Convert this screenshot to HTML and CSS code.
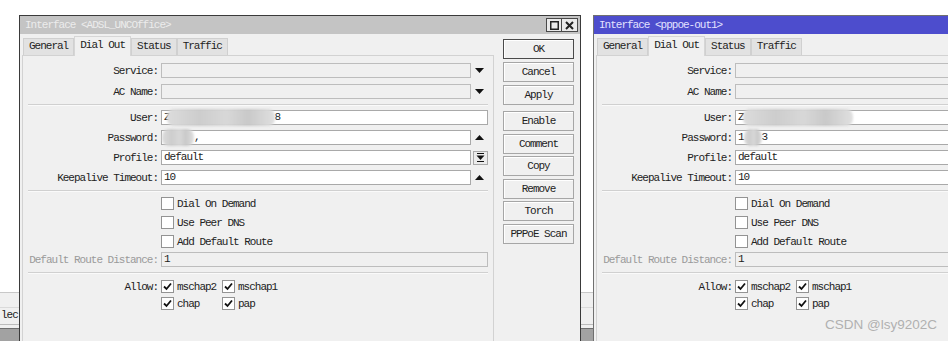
FILE: index.html
```html
<!DOCTYPE html>
<html lang="en">
<head>
    <meta charset="UTF-8">
    <title>Interface - Dial Out</title>
    <link rel="stylesheet" href="styles.css">
</head>
<body>
<div class="desktop">
    <div class="backdrop">
        <div class="back-blank"></div>
        <div class="back-row"></div>
        <div class="back-row tall"><span class="back-text">lec</span></div>
        <div class="back-gap"></div>
        <div class="back-bar"></div>
    </div>

    <!-- inactive window -->
    <div class="window win-left">
        <div class="titlebar">
            <span class="title">Interface &lt;ADSL_UNCOffice&gt;</span>
            <div class="title-btns">
                <span class="tbtn"><svg width="9" height="9" viewBox="0 0 9 9"><rect x="0.75" y="0.75" width="7.5" height="7.5" fill="none" stroke="#222" stroke-width="1.5"/></svg></span>
                <span class="tbtn"><svg width="9" height="9" viewBox="0 0 9 9"><path d="M1 1L8 8M8 1L1 8" stroke="#222" stroke-width="2"/></svg></span>
            </div>
        </div>
        <div class="win-body">
            <div class="tabbox">
                <div class="tabs">
                    <span class="tab">General</span>
                    <span class="tab active">Dial Out</span>
                    <span class="tab">Status</span>
                    <span class="tab">Traffic</span>
                </div>
                <div class="panel">
                    <div class="row first">
                        <span class="label">Service:</span>
                        <span class="field off"></span>
                        <span class="arrow"><svg width="9" height="5" viewBox="0 0 9 5"><path d="M0 0H9L4.5 5Z" fill="#111"/></svg></span>
                    </div>
                    <div class="row gap6">
                        <span class="label">AC Name:</span>
                        <span class="field off"></span>
                        <span class="arrow"><svg width="9" height="5" viewBox="0 0 9 5"><path d="M0 0H9L4.5 5Z" fill="#111"/></svg></span>
                    </div>
                    <div class="sep"></div>
                    <div class="row gap4">
                        <span class="label">User:</span>
                        <span class="field wide">Z<span class="blur user-l"></span>8</span>
                    </div>
                    <div class="row">
                        <span class="label">Password:</span>
                        <span class="field"><span class="blur pass-l"></span>,</span>
                        <span class="arrow"><svg width="9" height="5" viewBox="0 0 9 5"><path d="M0 5H9L4.5 0Z" fill="#111"/></svg></span>
                    </div>
                    <div class="row">
                        <span class="label">Profile:</span>
                        <span class="field">default</span>
                        <span class="drop-btn"><svg width="9" height="9" viewBox="0 0 9 9"><path d="M1 0.5H8M1 8.5H8" stroke="#111"/><path d="M0.5 2.5H8.5L4.5 7Z" fill="#111"/></svg></span>
                    </div>
                    <div class="row">
                        <span class="label">Keepalive Timeout:</span>
                        <span class="field">10</span>
                        <span class="arrow"><svg width="9" height="5" viewBox="0 0 9 5"><path d="M0 5H9L4.5 0Z" fill="#111"/></svg></span>
                    </div>
                    <div class="sep"></div>
                    <div class="row check">
                        <span class="label"></span>
                        <span class="opt"><span class="cb"></span>Dial On Demand</span>
                    </div>
                    <div class="row check gap6">
                        <span class="label"></span>
                        <span class="opt"><span class="cb"></span>Use Peer DNS</span>
                    </div>
                    <div class="row check gap6">
                        <span class="label"></span>
                        <span class="opt"><span class="cb"></span>Add Default Route</span>
                    </div>
                    <div class="row gap4">
                        <span class="label muted">Default Route Distance:</span>
                        <span class="field wide off">1</span>
                    </div>
                    <div class="sep"></div>
                    <div class="row check gap6">
                        <span class="label">Allow:</span>
                        <span class="opt col"><span class="cb on"><svg width="11" height="11" viewBox="0 0 11 11"><path d="M2 5.5L4.5 8L9 2.5" fill="none" stroke="#111" stroke-width="1.8"/></svg></span>mschap2</span>
                        <span class="opt"><span class="cb on"><svg width="11" height="11" viewBox="0 0 11 11"><path d="M2 5.5L4.5 8L9 2.5" fill="none" stroke="#111" stroke-width="1.8"/></svg></span>mschap1</span>
                    </div>
                    <div class="row check gap4">
                        <span class="label"></span>
                        <span class="opt col"><span class="cb on"><svg width="11" height="11" viewBox="0 0 11 11"><path d="M2 5.5L4.5 8L9 2.5" fill="none" stroke="#111" stroke-width="1.8"/></svg></span>chap</span>
                        <span class="opt"><span class="cb on"><svg width="11" height="11" viewBox="0 0 11 11"><path d="M2 5.5L4.5 8L9 2.5" fill="none" stroke="#111" stroke-width="1.8"/></svg></span>pap</span>
                    </div>
                </div>
            </div>
            <div class="actions">
                <button class="btn default">OK</button>
                <button class="btn">Cancel</button>
                <button class="btn">Apply</button>
                <button class="btn group">Enable</button>
                <button class="btn tight">Comment</button>
                <button class="btn tight">Copy</button>
                <button class="btn tight">Remove</button>
                <button class="btn tight">Torch</button>
                <button class="btn tight">PPPoE Scan</button>
            </div>
        </div>
    </div>

    <!-- active window -->
    <div class="window win-right">
        <div class="titlebar">
            <span class="title">Interface &lt;pppoe-out1&gt;</span>
        </div>
        <div class="win-body">
            <div class="tabbox">
                <div class="tabs">
                    <span class="tab">General</span>
                    <span class="tab active">Dial Out</span>
                    <span class="tab">Status</span>
                    <span class="tab">Traffic</span>
                </div>
                <div class="panel">
                    <div class="row first">
                        <span class="label">Service:</span>
                        <span class="field off"></span>
                    </div>
                    <div class="row gap6">
                        <span class="label">AC Name:</span>
                        <span class="field off"></span>
                    </div>
                    <div class="sep"></div>
                    <div class="row gap4">
                        <span class="label">User:</span>
                        <span class="field wide">Z<span class="blur user-r"></span></span>
                    </div>
                    <div class="row">
                        <span class="label">Password:</span>
                        <span class="field">1<span class="blur pass-r"></span>3</span>
                    </div>
                    <div class="row">
                        <span class="label">Profile:</span>
                        <span class="field">default</span>
                    </div>
                    <div class="row">
                        <span class="label">Keepalive Timeout:</span>
                        <span class="field">10</span>
                    </div>
                    <div class="sep"></div>
                    <div class="row check">
                        <span class="label"></span>
                        <span class="opt"><span class="cb"></span>Dial On Demand</span>
                    </div>
                    <div class="row check gap6">
                        <span class="label"></span>
                        <span class="opt"><span class="cb"></span>Use Peer DNS</span>
                    </div>
                    <div class="row check gap6">
                        <span class="label"></span>
                        <span class="opt"><span class="cb"></span>Add Default Route</span>
                    </div>
                    <div class="row gap4">
                        <span class="label muted">Default Route Distance:</span>
                        <span class="field wide off">1</span>
                    </div>
                    <div class="sep"></div>
                    <div class="row check gap6">
                        <span class="label">Allow:</span>
                        <span class="opt col"><span class="cb on"><svg width="11" height="11" viewBox="0 0 11 11"><path d="M2 5.5L4.5 8L9 2.5" fill="none" stroke="#111" stroke-width="1.8"/></svg></span>mschap2</span>
                        <span class="opt"><span class="cb on"><svg width="11" height="11" viewBox="0 0 11 11"><path d="M2 5.5L4.5 8L9 2.5" fill="none" stroke="#111" stroke-width="1.8"/></svg></span>mschap1</span>
                    </div>
                    <div class="row check gap4">
                        <span class="label"></span>
                        <span class="opt col"><span class="cb on"><svg width="11" height="11" viewBox="0 0 11 11"><path d="M2 5.5L4.5 8L9 2.5" fill="none" stroke="#111" stroke-width="1.8"/></svg></span>chap</span>
                        <span class="opt"><span class="cb on"><svg width="11" height="11" viewBox="0 0 11 11"><path d="M2 5.5L4.5 8L9 2.5" fill="none" stroke="#111" stroke-width="1.8"/></svg></span>pap</span>
                    </div>
                </div>
            </div>
        </div>
    </div>

    <div class="watermark">CSDN @lsy9202C</div>
</div>
</body>
</html>
```

FILE: styles.css
```css
* {
    box-sizing: border-box;
}

body {
    margin: 0;
    background: #fff;
    font-family: 'Liberation Mono', monospace;
    font-size: 11px;
    letter-spacing: -1px;
    color: #222;
}

.desktop {
    position: relative;
    width: 948px;
    height: 341px;
    overflow: hidden;
}

/* list of the main window behind the dialogs */
.backdrop {
    display: flex;
    flex-direction: column;
    height: 100%;
}

.back-blank {
    height: 292px;
}

.back-row {
    height: 15px;
    border-top: 1px solid #c8c8c8;
    background: #f0f0f0;
}

.back-row.tall {
    height: 17px;
    line-height: 15px;
    border-top-color: #dadada;
}

.back-text {
    display: inline-block;
    margin-left: 1px;
}

.back-gap {
    height: 4px;
    border-top: 1px solid #bcbcbc;
    background: #f0f0f0;
}

.back-bar {
    flex: 1;
    background: #a2a2a2;
    border-top: 1px solid #6e6e6e;
}

/* dialog windows */
.window {
    position: absolute;
    top: 15px;
    height: 340px;
    display: flex;
    flex-direction: column;
    background: #f0f0f0;
    border: 1px solid #3a3a3a;
}

.win-left {
    left: 19px;
    width: 562px;
}

.win-right {
    left: 593px;
    width: 562px;
    border-color: #707070;
}

.titlebar {
    height: 18px;
    flex: none;
    display: flex;
    align-items: center;
    justify-content: space-between;
    padding: 0 2px 0 5px;
    background: #c4c4c4;
    color: #ececec;
}

.win-right .titlebar {
    background: #4d4dcd;
    color: #e2e2ff;
}

.title-btns {
    display: flex;
}

.tbtn {
    width: 16px;
    height: 14px;
    display: flex;
    align-items: center;
    justify-content: center;
    border: 1px solid #4a4a4a;
    background: #eaeaea;
}

.tbtn + .tbtn {
    border-left: none;
}

.win-body {
    flex: 1;
    display: flex;
    padding: 2px 7px 0 2px;
}

.tabbox {
    width: 472px;
    flex: none;
    display: flex;
    flex-direction: column;
}

.tabs {
    height: 19px;
    display: flex;
    align-items: flex-end;
    padding-left: 1px;
}

.tab {
    height: 17px;
    padding: 0 5px;
    line-height: 15px;
    border: 1px solid #d0d0d0;
    border-bottom: none;
    background: #e2e2e2;
    white-space: nowrap;
}

.tab.active {
    position: relative;
    z-index: 1;
    height: 20px;
    margin-bottom: -1px;
    line-height: 17px;
    background: #f0f0f0;
    border-color: #d6d6d6;
}

.panel {
    flex: 1;
    border: 1px solid #d2d2d2;
    padding: 7px 5px 0;
}

.row {
    display: flex;
    align-items: center;
    height: 15px;
    margin-top: 5px;
}

.row.first {
    margin-top: 0;
}

.row.gap4 {
    margin-top: 4px;
}

.row.gap6 {
    margin-top: 6px;
}

.row.check {
    height: 13px;
}

.label {
    width: 130px;
    flex: none;
    margin-right: 3px;
    text-align: right;
    white-space: nowrap;
}

.label.muted {
    color: #9a9a9a;
}

.field {
    width: 310px;
    height: 15px;
    flex: none;
    padding: 0 2px;
    line-height: 13px;
    border: 1px solid #a9a9a9;
    background: #fff;
    white-space: nowrap;
}

.field.wide {
    width: 327px;
}

.field.off {
    background: #f0f0f0;
    border-color: #bdbdbd;
}

.arrow {
    width: 17px;
    display: flex;
    justify-content: center;
}

.drop-btn {
    width: 15px;
    height: 14px;
    margin-left: 2px;
    display: flex;
    align-items: center;
    justify-content: center;
    border: 1px solid #a9a9a9;
    background: #ebebeb;
}

/* pixelated blur over private values */
.blur {
    display: inline-block;
    height: 17px;
    margin: -2px 0;
    vertical-align: middle;
    border-radius: 7px;
    background: linear-gradient(90deg, #dcdcdc, #cdcdcd 30%, #d8d8d8 55%, #c9c9c9 75%, #e0e0e0);
    filter: blur(1px);
}

.blur.user-l {
    width: 108px;
    margin-left: -3px;
}

.blur.pass-l {
    width: 32px;
    margin-left: -2px;
}

.blur.user-r {
    width: 110px;
    margin-left: -1px;
}

.blur.pass-r {
    width: 18px;
}

.sep {
    height: 2px;
    margin-top: 5px;
    border-top: 1px solid #d0d0d0;
    border-bottom: 1px solid #fafafa;
}

.opt {
    display: flex;
    align-items: center;
    gap: 3px;
    white-space: nowrap;
}

.opt.col {
    width: 61px;
}

.cb {
    width: 13px;
    height: 13px;
    flex: none;
    display: flex;
    align-items: center;
    justify-content: center;
    border: 1px solid #939393;
    background: #fff;
}

.actions {
    width: 71px;
    flex: none;
    margin-left: 9px;
    padding-top: 3px;
    display: flex;
    flex-direction: column;
}

.btn {
    height: 20px;
    padding: 0;
    margin-top: 3px;
    font: inherit;
    letter-spacing: inherit;
    color: inherit;
    border: 1px solid #a6a6a6;
    background: #f0f0f0;
    box-shadow: inset 1px 1px #fff;
}

.btn.default {
    margin-top: 0;
    border-color: #4a4a4a;
}

.btn.group {
    margin-top: 6px;
}

.btn.tight {
    margin-top: 2.6px;
}

.watermark {
    position: absolute;
    left: 825px;
    top: 317px;
    font-family: 'Liberation Sans', Arial, sans-serif;
    font-size: 13.5px;
    letter-spacing: 0;
    color: #b0b0b0;
}
```
